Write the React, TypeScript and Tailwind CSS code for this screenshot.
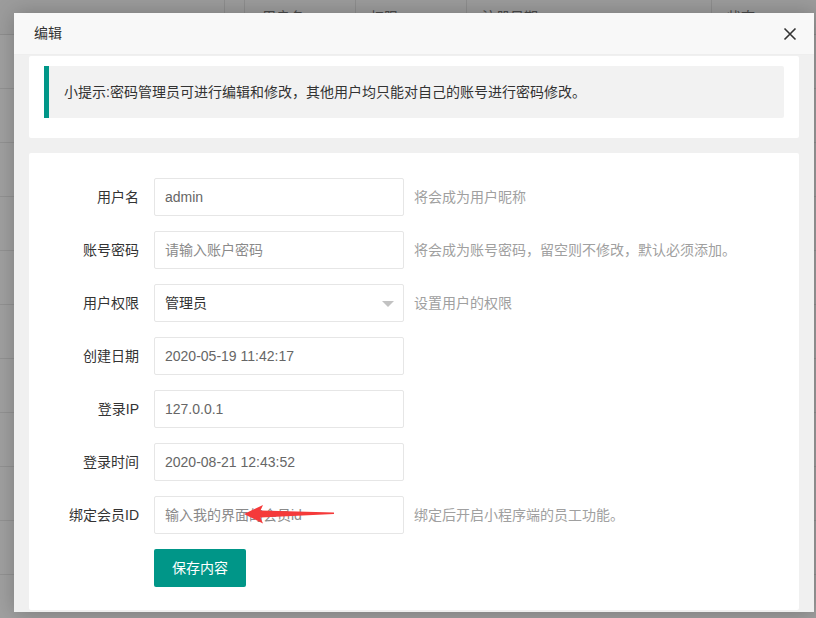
import React from 'react';

const rows = [
  { label: '用户名', value: 'admin', aux: '将会成为用户昵称' },
  { label: '账号密码', placeholder: '请输入账户密码', aux: '将会成为账号密码，留空则不修改，默认必须添加。' },
  { label: '用户权限', select: '管理员', aux: '设置用户的权限' },
  { label: '创建日期', value: '2020-05-19 11:42:17' },
  { label: '登录IP', value: '127.0.0.1' },
  { label: '登录时间', value: '2020-08-21 12:43:52' },
  { label: '绑定会员ID', placeholder: '输入我的界面的会员id', aux: '绑定后开启小程序端的员工功能。' },
];

function Backdrop() {
  // dimmed list page behind the dialog
  return (
    <div className="absolute inset-0 bg-[#a0a0a0]">
      <div className="flex h-[35px] border-b border-[#8e8e8e] bg-[#9c9c9c] text-[14px] text-[#4a4a4a]">
        <div className="w-[225px] border-r border-[#8e8e8e]" />
        <div className="w-[20px] border-r border-[#8e8e8e]" />
        <div className="w-[111px] border-r border-[#8e8e8e] pl-[17px] leading-[35px]">用户名</div>
        <div className="w-[111px] border-r border-[#8e8e8e] pl-[14px] leading-[35px]">权限</div>
        <div className="w-[245px] border-r border-[#8e8e8e] pl-[15px] leading-[35px]">注册日期</div>
        <div className="flex-1 pl-[15px] leading-[35px]">状态</div>
      </div>
      {Array.from({ length: 11 }).map((_, i) => (
        <div key={i} className="h-[54px] border-b border-[#929292]" />
      ))}
    </div>
  );
}

function FormRow({ row }: { row: (typeof rows)[0] }) {
  return (
    <div className="flex mb-[15px] h-[38px]">
      <label className="w-[110px] pr-[15px] text-right leading-[38px] text-[#333]">{row.label}</label>
      <div className="relative w-[250px] h-[38px] border border-[#e6e6e6] rounded-[2px] bg-white pl-[10px] leading-[36px]">
        {row.value && <span className="text-[#666]">{row.value}</span>}
        {row.placeholder && <span className="text-[#8a8a8a]">{row.placeholder}</span>}
        {row.select && (
          <>
            <span className="text-[#333]">{row.select}</span>
            <span className="absolute right-[9px] top-[16px] w-0 h-0 border-x-[6px] border-x-transparent border-t-[6px] border-t-[#c2c2c2]" />
          </>
        )}
      </div>
      {row.aux && <div className="ml-[10px] leading-[38px] text-[#a0a0a0]">{row.aux}</div>}
    </div>
  );
}

export default function App() {
  return (
    <div
      className="relative w-[816px] h-[618px] overflow-hidden text-[14px]"
      style={{ fontFamily: '"Liberation Sans", "Noto Sans CJK SC", sans-serif' }}
    >
      <Backdrop />

      <div className="absolute left-[14px] top-[13px] w-[800px] h-[599px] flex flex-col bg-[#f0f0f0] shadow-[1px_1px_20px_rgba(0,0,0,0.25)]">
        <div className="h-[42px] shrink-0 flex items-center justify-between bg-[#f8f8f8] border-b border-[#eee] pl-[20px] pr-[17px]">
          <span className="text-[#333]">编辑</span>
          <svg width="14" height="14" viewBox="0 0 14 14" className="text-[#333]">
            <path d="M1.5 1.5 L12.5 12.5 M12.5 1.5 L1.5 12.5" stroke="currentColor" strokeWidth="1.6" />
          </svg>
        </div>

        <div className="flex-1 px-[15px] pt-[1px] flex flex-col gap-[15px]">
          <div className="bg-white rounded-[2px] px-[15px] pt-[10px] pb-[20px]">
            <div className="h-[52px] bg-[#f2f2f2] border-l-[5px] border-[#009688] rounded-r-[2px] pl-[15px] leading-[52px] text-[#333]">
              小提示:密码管理员可进行编辑和修改，其他用户均只能对自己的账号进行密码修改。
            </div>
          </div>

          <div className="relative bg-white rounded-[2px] px-[15px] pt-[25px] h-[457px]">
            {rows.map((r) => (
              <FormRow key={r.label} row={r} />
            ))}
            <div className="pl-[110px]">
              <button className="h-[38px] w-[92px] bg-[#009688] text-white rounded-[2px]">保存内容</button>
            </div>

            {/* red annotation arrow */}
            <svg
              className="absolute left-[212px] top-[347px]"
              width="100"
              height="28"
              viewBox="0 0 100 28"
            >
              <path d="M3 14 L22 5 L19.5 10.5 L93 12.5 L93 14 L19.5 17.5 L22 23.5 Z" fill="#f53a3a" />
            </svg>
          </div>
        </div>
      </div>
    </div>
  );
}
